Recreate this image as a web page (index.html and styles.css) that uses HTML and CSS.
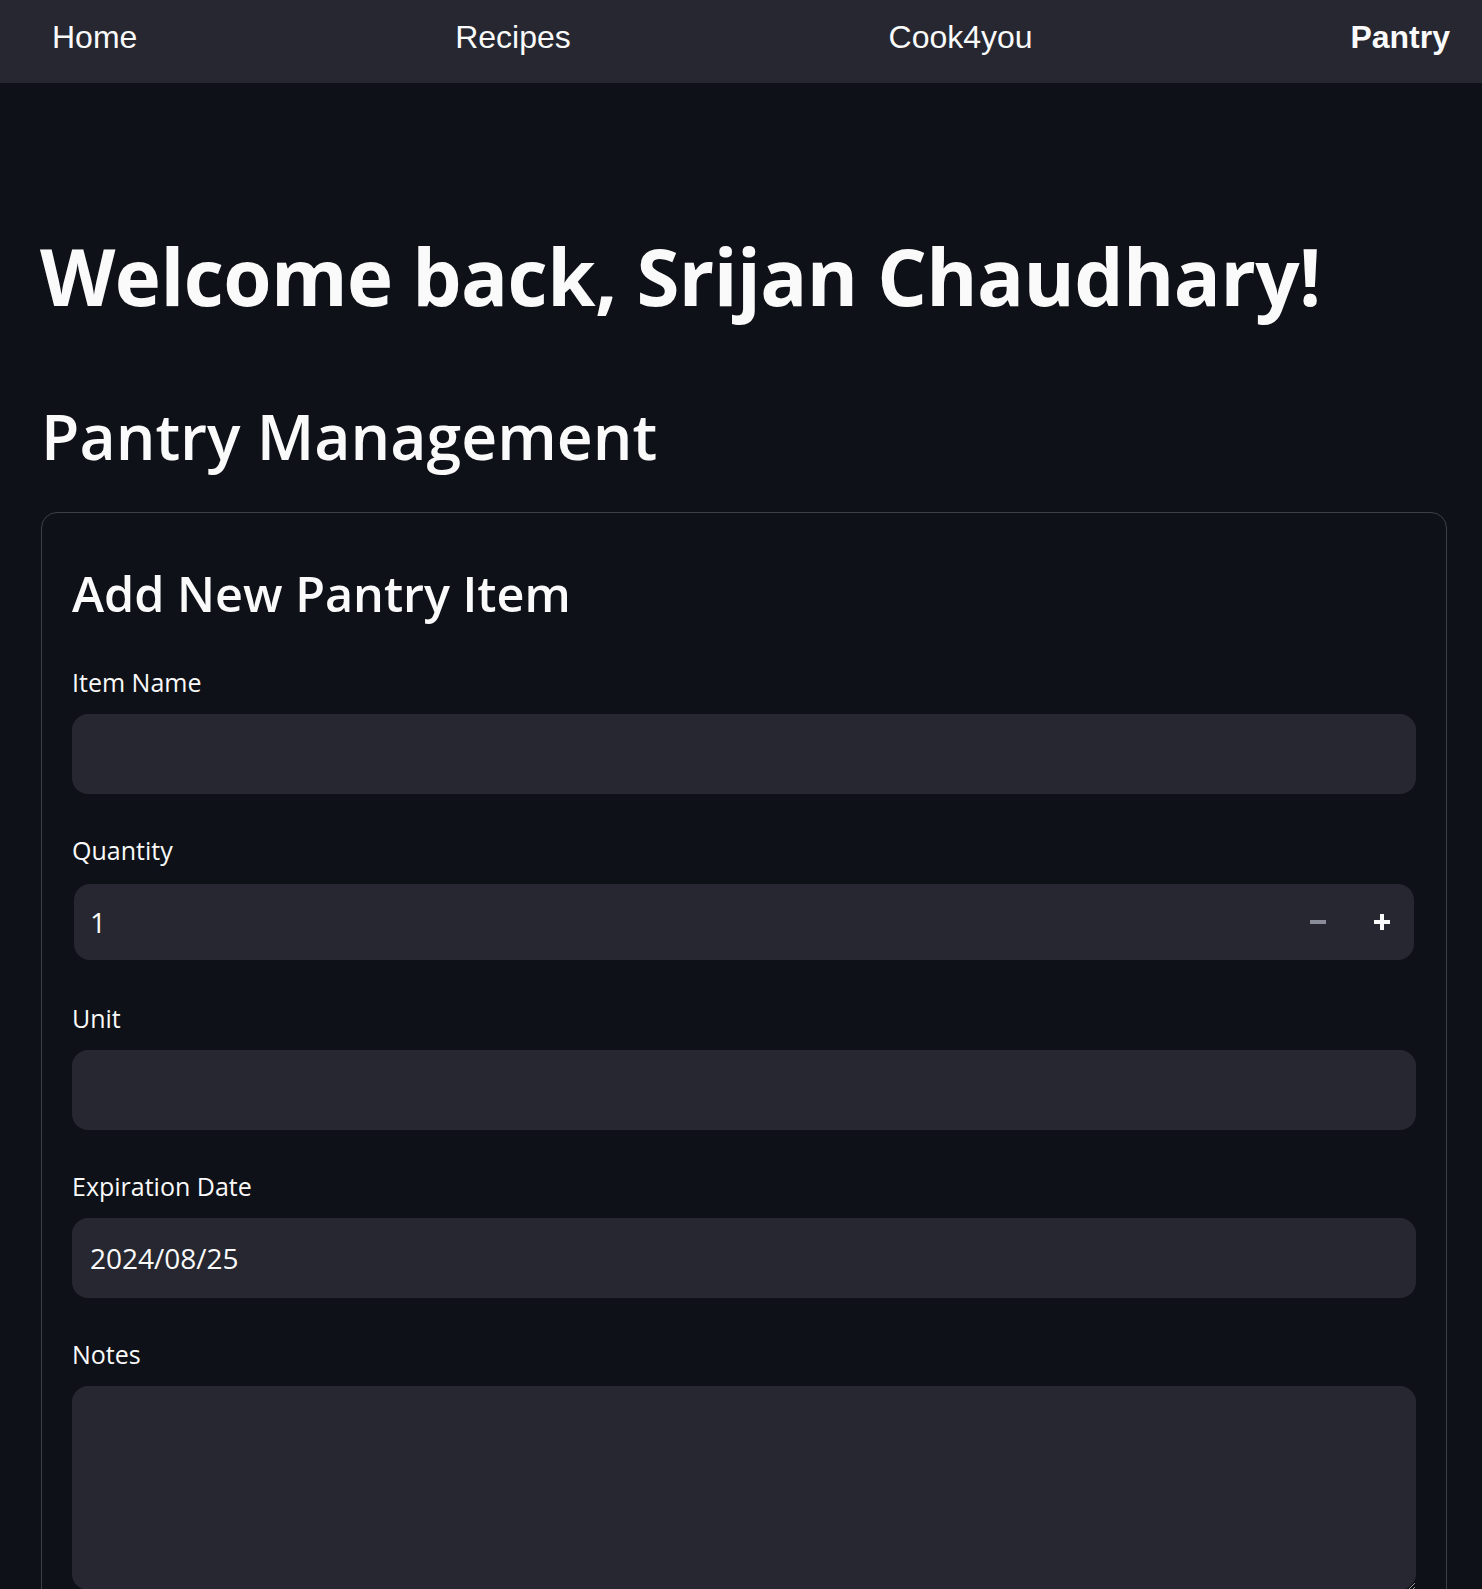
FILE: index.html
```html
<!DOCTYPE html>
<html lang="en">
<head>
<meta charset="utf-8">
<title>Pantry</title>
<link rel="stylesheet" href="styles.css">
</head>
<body>
<nav class="topnav">
  <a class="nav-link">Home</a>
  <a class="nav-link">Recipes</a>
  <a class="nav-link">Cook4you</a>
  <a class="nav-link active">Pantry</a>
</nav>
<main class="main">
  <h1 class="title">Welcome back, Srijan Chaudhary!</h1>
  <h2 class="subtitle">Pantry Management</h2>
  <form class="card">
    <h3 class="card-title">Add New Pantry Item</h3>
    <div class="fields">
      <div class="field">
        <label class="label">Item Name</label>
        <input class="input" type="text">
      </div>
      <div class="field">
        <label class="label">Quantity</label>
        <div class="number">
          <input class="number-value" type="text" value="1">
          <button type="button" class="step step-down" aria-label="minus">
            <svg width="16" height="4" viewBox="0 0 16 4"><rect width="16" height="4" fill="currentColor"/></svg>
          </button>
          <button type="button" class="step step-up" aria-label="plus">
            <svg width="16" height="16" viewBox="0 0 16 16"><rect x="0" y="6" width="16" height="4" fill="currentColor"/><rect x="6" y="0" width="4" height="16" fill="currentColor"/></svg>
          </button>
        </div>
      </div>
      <div class="field">
        <label class="label">Unit</label>
        <input class="input" type="text">
      </div>
      <div class="field">
        <label class="label">Expiration Date</label>
        <input class="input" type="text" value="2024/08/25">
      </div>
      <div class="field">
        <label class="label">Notes</label>
        <textarea class="textarea"></textarea>
      </div>
    </div>
  </form>
</main>
</body>
</html>
```

FILE: styles.css
```css
* { box-sizing: border-box; }
html, body { margin: 0; padding: 0; }
body {
  background: #0e1117;
  color: #fafafa;
  font-family: "Open Sans", "Noto Sans", sans-serif;
}
.topnav {
  height: 83px;
  background: #262730;
  display: flex;
  justify-content: space-between;
  align-items: flex-start;
  padding: 19px 32px 0 52px;
}
.nav-link {
  font-family: "Liberation Sans", Arial, sans-serif;
  font-size: 32px;
  line-height: 36px;
  color: #fafafa;
  text-decoration: none;
}
.nav-link.active { font-weight: 700; }
.main {
  padding: 0 35px 40px 41px;
}
.title {
  font-size: 78px;
  font-weight: 700;
  line-height: 1.2;
  margin: 147px 0 0 -1px;
  letter-spacing: -0.55px;
}
.subtitle {
  font-size: 62.5px;
  font-weight: 600;
  line-height: 1.2;
  margin: 74px 0 0 0;
}
.card {
  margin-top: 39px;
  border: 1px solid rgba(250, 250, 250, 0.2);
  border-radius: 16px;
  padding: 0 30px 30px;
}
.card-title {
  font-size: 48.5px;
  font-weight: 600;
  line-height: 1.2;
  margin: 51px 0 0 0;
}
.fields {
  display: flex;
  flex-direction: column;
  gap: 40px;
  margin-top: 44px;
}
.field {
  display: flex;
  flex-direction: column;
  gap: 16px;
}
.label {
  font-size: 25px;
  line-height: 32px;
  color: #fafafa;
}
.input, .number, .textarea {
  width: 100%;
  background: #262730;
  border: none;
  border-radius: 16px;
  color: #fafafa;
  outline: none;
}
.input {
  height: 80px;
  padding: 0 18px;
  font-family: "Open Sans", sans-serif;
  font-size: 28px;
}
.number {
  height: 76px;
  width: auto;
  margin: 2px;
  display: flex;
  align-items: center;
}
.number-value {
  flex: 1;
  min-width: 0;
  height: 100%;
  background: transparent;
  border: none;
  outline: none;
  color: #fafafa;
  font-family: "Open Sans", sans-serif;
  font-size: 28px;
  padding: 0 16px;
}
.step {
  width: 64px;
  height: 100%;
  border: none;
  background: transparent;
  display: flex;
  align-items: center;
  justify-content: center;
  padding: 0;
}
.step-down { color: #8a8c99; }
.step-up { color: #fafafa; }
.textarea {
  display: block;
  height: 204px;
  resize: vertical;
  padding: 16px 18px;
  font-family: "Open Sans", sans-serif;
  font-size: 28px;
}
```
